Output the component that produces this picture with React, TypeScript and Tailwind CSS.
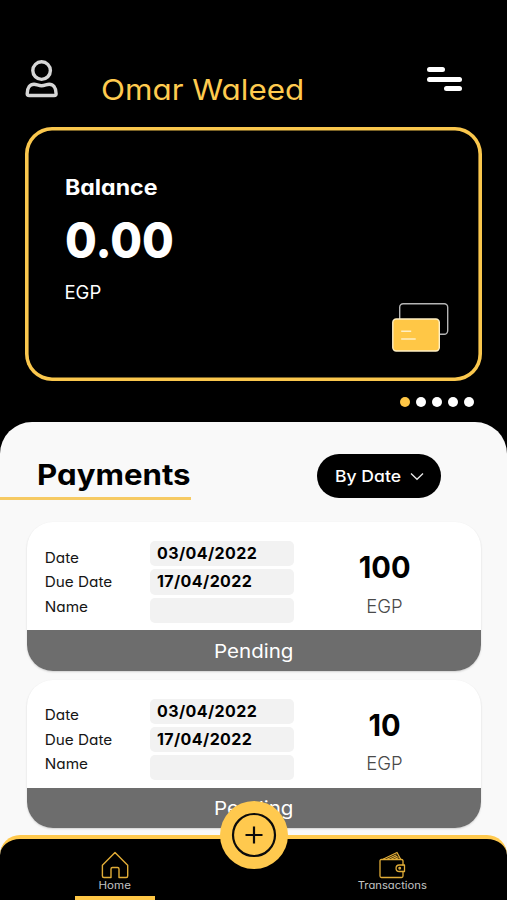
import React from "react";

type Payment = { date: string; due: string; name: string; amount: string };

const payments: Payment[] = [
  { date: "03/04/2022", due: "17/04/2022", name: "", amount: "100" },
  { date: "03/04/2022", due: "17/04/2022", name: "", amount: "10" },
];

function UserIcon() {
  return (
    <svg width="34" height="38" viewBox="0 0 34 38" fill="none" stroke="#d6d6d6" strokeWidth="3.4" strokeLinejoin="round">
      <circle cx="16.6" cy="10.6" r="8.800" />
      <path d="M2.200 33.800C2.200 27.500 5.200 24.200 9 24.200c2.600 0 4.400 1.500 7.600 1.500s5-1.500 7.600-1.500c3.800 0 6.900 3.300 6.900 9.600 0 1.200-.6 1.700-1.900 1.700H4.100c-1.300 0-1.900-.5-1.900-1.700Z" />
    </svg>
  );
}

function CardsIcon() {
  return (
    <svg width="58" height="50" viewBox="0 0 58 50" fill="none">
      <rect x="7.700" y="1.700" width="48" height="30.500" rx="3.500" stroke="#b5b5b5" strokeWidth="1.400" />
      <rect x="0.800" y="17" width="46.500" height="32" rx="3.500" fill="#ffc746" stroke="#fff0c4" strokeWidth="1.400" />
      <path d="M9.200 29.200h10M9.200 37h14.500" stroke="#fff0c4" strokeWidth="1.600" />
    </svg>
  );
}

function HomeIcon() {
  return (
    <svg width="28" height="28" viewBox="0 0 28 28" fill="none" stroke="#e0ac37" strokeWidth="1.400" strokeLinejoin="round">
      <path d="M14 1.500 1.400 14.300V25q0 1.500 1.500 1.500H10V18q0-1.500 1.500-1.500h5q1.500 0 1.500 1.500v8.500h7.200q1.500 0 1.500-1.500V14.300Z" />
    </svg>
  );
}

function WalletIcon() {
  return (
    <svg width="27" height="28" viewBox="0 0 27 28" fill="none" stroke="#e0ac37" strokeWidth="1.300" strokeLinejoin="round" strokeLinecap="round">
      <path d="M24 14V10q0-1.500-1.500-1.500H2.500Q1 8.500 1 10v15q0 1.500 1.500 1.500h20q1.500 0 1.500-1.500v-4.500" />
      <path d="M25.500 14h-5.200a3.200 3.200 0 0 0 0 6.500h5.200Z" />
      <circle cx="20.700" cy="17.200" r=".8" />
      <path d="M4.500 8 18 1.500 21.500 8M8.500 8l8.500-4M12.500 8l5.500-2.600M16.500 8l2.500-1.200" />
    </svg>
  );
}

function PaymentCard({ payment }: { payment: Payment }) {
  return (
    <article className="flex h-[148.500px] shrink-0 flex-col overflow-hidden rounded-[26px] bg-white shadow-[0_1px_2px_rgba(0,0,0,0.16)]">
      <div className="flex h-[108px] shrink-0">
        <div className="flex w-[123.500px] origin-left scale-x-[1.070] flex-col pl-[16.600px] pt-[23.600px] text-[14.300px] leading-[24.500px] text-[#161616]">
          <span>Date</span>
          <span>Due Date</span>
          <span>Name</span>
        </div>
        <div className="flex w-[144px] flex-col gap-[3px] pt-[19px] text-[16px] font-bold leading-[24px] tracking-[0.400px] text-black">
          {[payment.date, payment.due, payment.name].map((value, i) => (
            <div key={i} className="h-[25.300px] rounded-[5px] bg-[#f2f2f2] pl-[7px]">{value}</div>
          ))}
        </div>
        <div className="flex w-[181px] flex-col items-center pt-[30px]">
          <span className="scale-x-[0.97] text-[30px] font-bold leading-[30px] text-black">{payment.amount}</span>
          <span className="mt-[11.500px] text-[18.500px] font-light leading-[24px] text-[#4a4a4a]">EGP</span>
        </div>
      </div>
      <div className="flex flex-1 items-center justify-center bg-[#6d6d6d] pt-[3px] text-[18.500px] text-white">
        <span className="scale-x-[1.110]">Pending</span>
      </div>
    </article>
  );
}

export default function App() {
  return (
    <div className="relative flex h-[900px] w-[507px] flex-col overflow-hidden bg-black font-['Inter',sans-serif] whitespace-nowrap [font-feature-settings:'cv11']">
      <header className="flex h-[127px] shrink-0 pl-[25px]">
        <div className="w-[76px] pt-[59.500px]"><UserIcon /></div>
        <h1 className="w-[326px] origin-left scale-x-[1.120] pt-[72px] text-[28px] leading-[36px] text-[#ffcb4f]">Omar Waleed</h1>
        <button className="flex h-[91px] w-[35px] flex-col justify-end gap-[4.500px]" aria-label="Menu">
          <span className="h-[5px] w-[18px] rounded-full bg-white" />
          <span className="h-[5px] w-[35px] rounded-full bg-white" />
          <span className="h-[5px] w-[18px] self-end rounded-full bg-white" />
        </button>
      </header>

      <section className="mx-[25px] flex h-[254px] shrink-0 justify-between rounded-[27px] p-[3px] text-white shadow-[inset_0_0_0_3.600px_#fac74d]">
        <div className="flex flex-col items-start pl-[36.500px]">
          <span className="mt-[46px] origin-left scale-x-[1.100] text-[21px] font-bold leading-[24px]">Balance</span>
          <span className="mt-[14.500px] origin-left scale-x-[0.920] text-[50px] font-extrabold leading-[50px]">0.00</span>
          <span className="mt-[15px] text-[18.500px] leading-[24px]">EGP</span>
        </div>
        <div className="flex items-end pb-[26px] pr-[29px]"><CardsIcon /></div>
      </section>

      <div className="flex h-[42px] shrink-0 items-center justify-end gap-[6.400px] pr-[33.500px]">
        <span className="size-[9.500px] rounded-full bg-[#ffc746]" />
        <span className="size-[9.500px] rounded-full bg-white" />
        <span className="size-[9.500px] rounded-full bg-white" />
        <span className="size-[9.500px] rounded-full bg-white" />
        <span className="size-[9.500px] rounded-full bg-white" />
      </div>

      <main className="-mt-px flex h-[478px] shrink-0 flex-col rounded-t-[32px] bg-[#f9f9f9]">
        <div className="flex h-[100px] shrink-0">
          <div className="w-[317px]">
            <h2 className="h-[77.500px] w-[191px] border-b-[3px] border-[#f6ca63] pl-[36.500px] pt-[36px] text-[28.500px] font-bold leading-[33px] text-black">
              <span className="inline-block origin-left scale-x-[1.095]">Payments</span>
            </h2>
          </div>
          <button className="mt-[32px] flex h-[44px] w-[124px] items-center rounded-full bg-black pl-[18px] text-[16.500px] font-medium text-white">
            <span className="w-[74.500px] origin-left scale-x-[1.065] text-left">By Date</span>
            <svg width="14" height="9" viewBox="0 0 14 9" fill="none" stroke="#e8e8e8" strokeWidth="1.300"><path d="m1 1.500 6 5.800 6-5.800" /></svg>
          </button>
        </div>
        <div className="flex flex-col gap-[9px] pl-[26.500px] pr-[26px]">
          {payments.map((payment, i) => <PaymentCard key={i} payment={payment} />)}
        </div>
      </main>

      <nav className="absolute inset-x-0 bottom-0 flex h-[65px] rounded-t-[20px] border-t-[4px] border-[#ffc94e] bg-black text-[10.500px] leading-[12px] text-[#c4c4c4]">
        <div className="ml-[75px] flex w-[80px] flex-col items-center">
          <div className="mt-[12px]"><HomeIcon /></div>
          <span className="mt-[1px] scale-x-[1.100]">Home</span>
          <span className="mt-auto h-[4px] w-full bg-[#ffc746]" />
        </div>
        <div className="ml-[197px] flex w-[80px] flex-col items-center">
          <div className="mt-[12px]"><WalletIcon /></div>
          <span className="mt-[1px] scale-x-[1.070]">Transactions</span>
        </div>
        <button className="absolute left-[220px] top-[-38px] flex size-[68px] items-center justify-center rounded-full bg-[#ffc94e]" aria-label="Add">
          <svg width="46" height="46" viewBox="0 0 46 46" fill="none" stroke="#0b0b0b" strokeWidth="2.200"><circle cx="23" cy="23" r="21" /><path d="M14.500 23h17M23 14.500v17" /></svg>
        </button>
      </nav>
    </div>
  );
}
